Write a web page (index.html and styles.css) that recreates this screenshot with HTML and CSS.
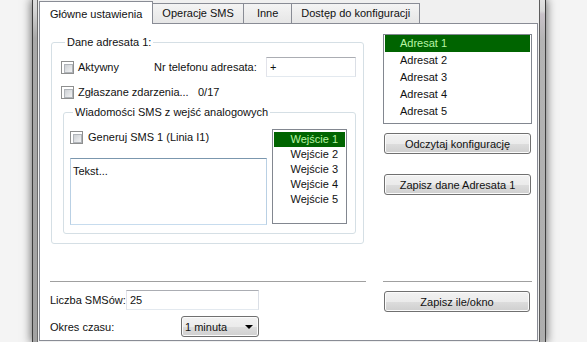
FILE: index.html
```html
<!DOCTYPE html>
<html>
  <head>
    <title>Konfiguracja SMS</title>
    <meta charset="utf-8">
    <link rel="stylesheet" href="styles.css">
  </head>
  <body>
    <div class="window">
      <div class="frame frame-left"></div>
      <div class="client">
        <div class="tabs">
          <div class="tab active">Główne ustawienia</div>
          <div class="tab">Operacje SMS</div>
          <div class="tab tab-short">Inne</div>
          <div class="tab">Dostęp do konfiguracji</div>
        </div>
        <div class="panel">
          <div class="top">
            <fieldset class="group outer">
              <legend>Dane adresata 1:</legend>
              <div class="row row-active">
                <label class="check"><span class="box"></span>Aktywny</label>
                <span>Nr telefonu adresata:</span>
                <input class="field" type="text" value="+">
              </div>
              <div class="row row-events">
                <label class="check"><span class="box"></span>Zgłaszane zdarzenia...</label>
                <span>0/17</span>
              </div>
              <fieldset class="group inner">
                <legend>Wiadomości SMS z wejść analogowych</legend>
                <div class="inner-body">
                  <div class="sms">
                    <label class="check"><span class="box"></span>Generuj SMS 1 (Linia I1)</label>
                    <textarea class="field text">Tekst...</textarea>
                  </div>
                  <ul class="list inputs">
                    <li class="selected">Wejście 1</li>
                    <li>Wejście 2</li>
                    <li>Wejście 3</li>
                    <li>Wejście 4</li>
                    <li>Wejście 5</li>
                  </ul>
                </div>
              </fieldset>
            </fieldset>
            <div class="side">
              <ul class="list recipients">
                <li class="selected">Adresat 1</li>
                <li>Adresat 2</li>
                <li>Adresat 3</li>
                <li>Adresat 4</li>
                <li>Adresat 5</li>
              </ul>
              <button class="btn btn-read">Odczytaj konfigurację</button>
              <button class="btn btn-save">Zapisz dane Adresata 1</button>
            </div>
          </div>
          <div class="bottom">
            <div class="limits">
              <div class="sep"></div>
              <div class="line line-count">
                <span>Liczba SMSów:</span>
                <input class="field count" type="text" value="25">
              </div>
              <div class="line line-period">
                <span>Okres czasu:</span>
                <div class="select"><span>1 minuta</span><span class="arrow"></span></div>
              </div>
            </div>
            <div class="limits-side">
              <div class="sep"></div>
              <button class="btn btn-limit">Zapisz ile/okno</button>
            </div>
          </div>
        </div>
      </div>
      <div class="frame frame-right"></div>
    </div>
  </body>
</html>
```

FILE: styles.css
```css
* {
  box-sizing: border-box;
}

html, body {
  margin: 0;
  height: 100%;
}

body {
  background: #f4f4f4;
  font-family: "Liberation Sans", Arial, sans-serif;
  font-size: 11px;
  color: #111;
  overflow: hidden;
}

.window {
  display: flex;
  width: 514px;
  height: 342px;
  margin-left: 32px;
  box-shadow: 0 0 9px 1px rgba(0, 0, 0, 0.55);
}

.frame-left {
  width: 6px;
  border-left: 1px solid #3e3e3e;
  border-right: 1px solid #6c6c6c;
  background: linear-gradient(#dcdcdc 0, #d4d4d4 11px, #a9a9a9 38px, #a2a2a2);
}

.frame-right {
  width: 7px;
  border-left: 1px solid #5c5c5c;
  border-right: 1px solid #3e3e3e;
  background: linear-gradient(#e2e2e2 0, #d8d8d8 11px, #c9c2c9 14px, #b4b4b4 40px, #adadad);
}

.client {
  width: 501px;
  display: flex;
  flex-direction: column;
  padding: 0 1px;
  background: #f0f0f0;
}

/* tabs */
.tabs {
  display: flex;
  align-items: flex-end;
  height: 23px;
}

.tab {
  height: 20px;
  padding: 0 9px;
  margin-left: -1px;
  border: 1px solid #898c95;
  border-bottom: none;
  background: linear-gradient(#f4f4f4, #e6e6e6);
  line-height: 19px;
  white-space: nowrap;
}

.tab-short {
  padding: 0 13px;
}

.tab.active {
  position: relative;
  z-index: 1;
  height: 23px;
  margin: 0 0 -1px 0;
  padding: 2px 10px 0;
  background: #fff;
  line-height: 20px;
}

.panel {
  flex: 1;
  margin-bottom: 1px;
  border: 1px solid #898c95;
  background: #fff;
}

/* top part */
.top {
  display: grid;
  grid-template-columns: 313px 149px;
  column-gap: 19px;
  align-items: start;
  padding: 10px 0 0 11px;
}

.group {
  min-width: 0;
  margin: 0;
  border: 1px solid #d5dfe5;
  border-radius: 3px;
}

.group legend {
  padding: 0 2px;
  line-height: 15px;
}

.outer {
  margin-top: 1px;
  padding: 7px 7px 9px 9px;
}

.outer > legend {
  margin-left: 4px;
}

.row {
  display: grid;
  align-items: center;
  height: 20px;
  white-space: nowrap;
}

.row-active {
  grid-template-columns: 93px 1fr 90px;
}

.row-events {
  grid-template-columns: 137px auto;
  margin-top: 5px;
}

.check {
  display: flex;
  align-items: center;
  gap: 4px;
  white-space: nowrap;
}

.box {
  position: relative;
  width: 13px;
  height: 13px;
  border: 1px solid #8e8f8f;
  background: #fff;
}

.box::after {
  content: "";
  position: absolute;
  left: 2px;
  top: 2px;
  width: 7px;
  height: 7px;
  border: 1px solid #b0b4b9;
  background: linear-gradient(135deg, #cdd0d4, #f1f2f3);
}

.field {
  height: 20px;
  padding: 0 3px;
  border: 1px solid;
  border-color: #abadb3 #dbdfe6 #e3e9ef #e2e3ea;
  font: inherit;
  color: #111;
  outline: none;
}

.inner {
  margin: 3px 0 0 2px;
  padding: 9px 8px 8px 6px;
}

.inner > legend {
  margin-left: 3px;
}

.inner-body {
  display: flex;
  gap: 5px;
  height: 96px;
}

.sms {
  width: 197px;
}

.sms .check {
  height: 16px;
  gap: 5px;
}

.text {
  display: block;
  width: 197px;
  height: 67px;
  margin-top: 13px;
  padding: 5px 2px;
  border-color: #7b97ae #b9d0e4 #c7dcee #b9d0e4;
  resize: none;
  line-height: 15px;
}

/* list boxes */
.list {
  margin: 0;
  padding: 0 1px;
  list-style: none;
  border: 1px solid #828790;
  background: #fff;
}

.list li.selected {
  background: #006400;
  color: #b8f5a4;
}

.inputs {
  width: 75px;
  height: 95px;
  padding-top: 2px;
}

.inputs li {
  padding-right: 7px;
  text-align: right;
  line-height: 15px;
}

.recipients {
  height: 90px;
}

.recipients li {
  padding-left: 15px;
  line-height: 17px;
}

/* buttons */
.btn {
  display: block;
  height: 21px;
  margin: 0 1px;
  padding: 0;
  border: 1px solid #707070;
  border-radius: 3px;
  background: linear-gradient(#f2f2f2 0%, #ebebeb 50%, #dddddd 51%, #cfcfcf 100%);
  box-shadow: inset 0 0 0 1px #fbfbfb;
  font: inherit;
  color: #111;
}

.side .btn {
  width: 147px;
}

.btn-read {
  margin-top: 9px;
}

.btn-save {
  margin-top: 20px;
}

/* bottom part */
.bottom {
  display: grid;
  grid-template-columns: 316px 149px;
  column-gap: 17px;
  margin-top: 37px;
  padding-left: 10px;
}

.sep {
  height: 2px;
  border-top: 1px solid #a0a0a0;
  border-bottom: 1px solid #fff;
}

.line {
  display: flex;
  align-items: center;
  justify-content: space-between;
  width: 209px;
  white-space: nowrap;
}

.line-count {
  margin-top: 7px;
}

.count {
  width: 133px;
}

.line-period {
  margin-top: 6px;
}

.select {
  display: flex;
  align-items: center;
  justify-content: space-between;
  width: 78px;
  height: 21px;
  padding: 0 5px 0 3px;
  border: 1px solid #707070;
  border-radius: 3px;
  background: linear-gradient(#f2f2f2 0%, #ebebeb 50%, #dddddd 51%, #cfcfcf 100%);
  box-shadow: inset 0 0 0 1px #fbfbfb;
}

.arrow {
  width: 0;
  height: 0;
  border-left: 4px solid transparent;
  border-right: 4px solid transparent;
  border-top: 4px solid #000;
}

.btn-limit {
  width: 146px;
  margin-top: 8px;
}
```
